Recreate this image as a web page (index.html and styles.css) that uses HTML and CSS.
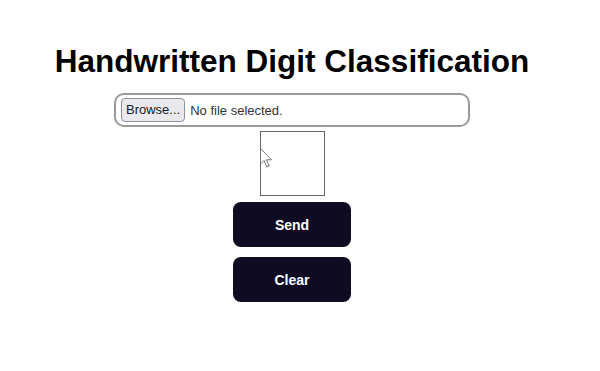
FILE: index.html
```html
<!DOCTYPE html>
<html>
<head>
<meta charset="utf-8">
<link rel="stylesheet" href="styles.css">
</head>
<body>
<main class="page">
  <h1 class="title">Handwritten Digit Classification</h1>
  <div class="file-box">
    <span class="browse">Browse...</span>
    <span class="file-status">No file selected.</span>
  </div>
  <div class="canvas">
    <svg class="cursor" width="14" height="22" viewBox="0 0 14 22">
      <path d="M0.5 0.5 L0.5 16 L4 12.5 L6.8 19 L9.2 18 L6.5 11.8 L11.5 11.8 Z" fill="#fff" stroke="#777" stroke-width="1"/>
    </svg>
  </div>
  <button class="action">Send</button>
  <button class="action">Clear</button>
</main>
</body>
</html>
```
FILE: styles.css
```css
html, body {
  margin: 0;
  padding: 0;
  background: #ffffff;
}
.page {
  width: 584px;
  display: flex;
  flex-direction: column;
  align-items: center;
  font-family: "Liberation Sans", Arial, sans-serif;
}
.title {
  margin: 43px 0 0 0;
  font-size: 31.5px;
  font-weight: bold;
  line-height: 37px;
  color: #000;
}
.file-box {
  margin-top: 13px;
  width: 347px;
  height: 30px;
  border: 2px solid #9a9a9a;
  border-radius: 10px;
  display: flex;
  align-items: center;
  padding-left: 5px;
  gap: 5px;
  font-size: 13px;
}
.browse {
  background: #e9e9ed;
  border: 1px solid #8f8f9d;
  border-radius: 4px;
  padding: 3px 4px;
  color: #1b1b1b;
  line-height: 16px;
}
.file-status {
  color: #333;
}
.canvas {
  margin-top: 4px;
  width: 63px;
  height: 63px;
  border: 1px solid #666;
  position: relative;
}
.cursor {
  position: absolute;
  left: -1px;
  top: 16px;
}
.action {
  width: 118px;
  height: 45px;
  border: none;
  border-radius: 8px;
  background: #0e0b22;
  color: #fff;
  font-family: "Liberation Sans", Arial, sans-serif;
  font-weight: bold;
  font-size: 14px;
  margin-top: 6px;
}
.action + .action {
  margin-top: 10px;
}
```
